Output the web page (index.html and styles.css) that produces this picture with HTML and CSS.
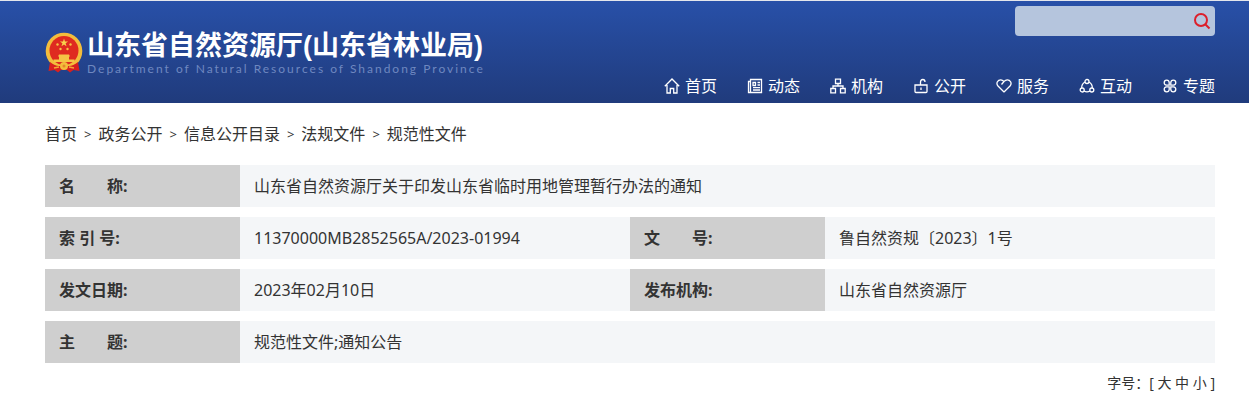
FILE: index.html
```html
<!DOCTYPE html>
<html lang="zh-CN">
<head>
<meta charset="utf-8">
<title>山东省自然资源厅</title>
<link rel="stylesheet" href="styles.css">
</head>
<body>
<header class="header">
  <form class="search" role="search">
    <input class="search-input" type="search" aria-label="搜索">
    <button class="search-button" type="submit" aria-label="搜索">
      <svg width="18" height="18" viewBox="0 0 18 18" fill="none" stroke="#dc1f2b" stroke-width="2"><circle cx="8" cy="8" r="6"/><path d="M12 12l4.500 4.500"/></svg>
    </button>
  </form>
  <a class="brand" href="#">
    <svg class="emblem" width="38" height="41" viewBox="0 0 38 41">
      <circle cx="19" cy="19" r="18.300" fill="#f3bd3c"/>
      <circle cx="19" cy="18.500" r="14.500" fill="#df2a20"/>
      <path d="M5 30q5 4 9 4h10q4 0 9-4l1.500 9-6-1-3.500 2.500-3-2.500h-6l-3 2.500L9.500 38l-6 1z" fill="#d8201f"/>
      <path d="M19 6.500l1 2.900h3.100l-2.500 1.900.9 3-2.500-1.800-2.500 1.800.9-3-2.500-1.900H18z" fill="#f8d34d"/>
      <g fill="#f5c445"><circle cx="12.500" cy="12.500" r="1.200"/><circle cx="25.500" cy="12.500" r="1.200"/><circle cx="15.500" cy="17" r="1.200"/><circle cx="22.500" cy="17" r="1.200"/>
      <path d="M14 22.500h10l1 2h-1v3h5.500v2.500h-21v-2.500H14v-3h-1z"/></g>
      <circle cx="19" cy="34" r="4" fill="#f3bd3c"/><circle cx="19" cy="34" r="1.500" fill="#e5852b"/>
      <path d="M9 36l5-1M29 36l-5-1" stroke="#f3a632" fill="none" stroke-width="1.500"/>
    </svg>
    <span class="brand-text">
      <span class="brand-name">山东省自然资源厅(山东省林业局)</span>
      <span class="brand-sub">Department of Natural Resources of Shandong Province</span>
    </span>
  </a>
  <nav class="nav">
    <a href="#"><svg viewBox="0 0 16 16"><path d="M.8 8.300L8 1l7.200 7.300M3 7v8h3.300v-4.500h3.400V15H13V7"/></svg>首页</a>
    <a href="#"><svg viewBox="0 0 16 16"><path d="M3.500 1.500h11v13h-13v-11h2zM3.500 3v11M6 4.500h2.500v3H6zM10.500 4.500H13M10.500 7H13M6 9.700h7M6 12h7"/></svg>动态</a>
    <a href="#"><svg viewBox="0 0 16 16"><path d="M5.500 1.200h5v4.300h-5zM8 5.500V8M3 10.500V8h10v2.500M.8 10.500h4.700v4.300H.8zM10.500 10.500h4.700v4.300h-4.700z"/></svg>机构</a>
    <a href="#"><svg viewBox="0 0 16 16"><path d="M2 7h12v6.500q0 1-1 1H3q-1 0-1-1zM7.500 7V4q0-2.500 2.300-2.500Q12 1.500 12 4M8 9.500v2.500"/></svg>公开</a>
    <a href="#"><svg viewBox="0 0 16 16"><path d="M8 14L2 8C-.5 5 2 1.700 4.800 1.800 6.500 1.900 7.500 3 8 3.500l-2.500 3M8 3.500c.5-.5 1.500-1.600 3.200-1.700C14 1.700 16.500 5 14 8l-6 6"/></svg>服务</a>
    <a href="#"><svg viewBox="0 0 16 16"><circle cx="8" cy="3.500" r="2"/><circle cx="3.200" cy="12" r="2"/><circle cx="12.800" cy="12" r="2"/><path d="M6 4Q2.500 6 2.700 10M10 4q3.500 2 3.300 6M5 13q3 1.700 6 0"/></svg>互动</a>
    <a href="#"><svg viewBox="0 0 16 16"><path d="M7.200 7.200H4.500a2.500 2.500 0 1 1 2.700-2.700zM8.800 7.200V4.500a2.500 2.500 0 1 1 2.700 2.700zM7.200 8.800v2.700a2.500 2.500 0 1 1-2.700-2.700zM8.800 8.800h2.700a2.500 2.500 0 1 1-2.700 2.700z"/></svg>专题</a>
  </nav>
</header>
<main class="content">
  <nav class="crumbs" aria-label="当前位置">
    <a href="#">首页</a><span>&gt;</span><a href="#">政务公开</a><span>&gt;</span><a href="#">信息公开目录</a><span>&gt;</span><a href="#">法规文件</a><span>&gt;</span><a href="#">规范性文件</a>
  </nav>
  <table class="info">
    <colgroup><col class="col-label"><col class="col-value"><col class="col-label"><col class="col-value"></colgroup>
    <tr><th scope="row">名&emsp;&emsp;称:</th><td colspan="3">山东省自然资源厅关于印发山东省临时用地管理暂行办法的通知</td></tr>
    <tr><th scope="row">索 引 号:</th><td>11370000MB2852565A/2023-01994</td><th scope="row">文&emsp;&emsp;号:</th><td>鲁自然资规〔2023〕1号</td></tr>
    <tr><th scope="row">发文日期:</th><td>2023年02月10日</td><th scope="row">发布机构:</th><td>山东省自然资源厅</td></tr>
    <tr><th scope="row">主&emsp;&emsp;题:</th><td colspan="3">规范性文件;通知公告</td></tr>
  </table>
  <div class="font-size">字号：[ <a href="#">大</a> <a href="#">中</a> <a href="#">小</a> ]</div>
</main>
</body>
</html>
```
FILE: styles.css
```css
* { box-sizing: border-box; }
body {
  margin: 0;
  background: #fff;
  color: #333;
  font: 16px/24px "Noto Sans", "Noto Sans CJK SC", sans-serif;
}
a { color: inherit; text-decoration: none; }
.header {
  display: grid;
  grid-template-columns: auto 1fr;
  row-gap: 38px;
  padding: 5px 34px 4px 45px;
  border-top: 1px solid #e4e6ec;
  background: linear-gradient(#2850a8, #203b7c);
  background-clip: padding-box;
}
.search {
  grid-column: 2;
  justify-self: end;
  display: flex;
  align-items: center;
  width: 200px;
  height: 30px;
  border-radius: 4px;
  background: #b5c5dd;
}
.search-input {
  flex: 1;
  min-width: 0;
  height: 30px;
  padding: 0 8px;
  border: 0;
  outline: 0;
  background: transparent;
  font: inherit;
}
.search-button {
  display: flex;
  padding: 4px;
  border: 0;
  background: transparent;
}
.brand {
  grid-column: 1;
  grid-row: 1 / 3;
  align-self: center;
  display: flex;
  align-items: center;
  gap: 4px;
  color: #fff;
}
.brand-text { display: flex; flex-direction: column; }
.brand-name { font: bold 27px/32px "Liberation Sans", "Noto Sans CJK SC", sans-serif; }
.brand-sub {
  color: #6f88c0;
  font: 12px/14px Lato, sans-serif;
  letter-spacing: 2px;
}
.nav {
  grid-column: 2;
  align-self: end;
  justify-self: end;
  display: flex;
  gap: 30px;
  padding-bottom: 1px;
  color: #fff;
}
.nav a { display: flex; align-items: center; gap: 5px; white-space: nowrap; }
.nav svg {
  width: 16px;
  height: 16px;
  fill: none;
  stroke: #fff;
  stroke-width: 1.300;
}
.content { padding: 19px 34px 12px 45px; }
.crumbs { display: flex; flex-wrap: wrap; gap: 7px; }
.crumbs span { font-size: 13px; }
.info {
  width: 100%;
  margin: 9px 0 0;
  table-layout: fixed;
  border-collapse: separate;
  border-spacing: 0 10px;
}
.col-label { width: 16.6667%; }
.col-value { width: 33.3333%; }
.info th, .info td { height: 42px; padding: 0 14px; text-align: left; }
.info th { background: #cfcfcf; font-weight: bold; }
.info td { background: #f4f6f8; }
.font-size { font-size: 14px; line-height: 20px; text-align: right; }
```
